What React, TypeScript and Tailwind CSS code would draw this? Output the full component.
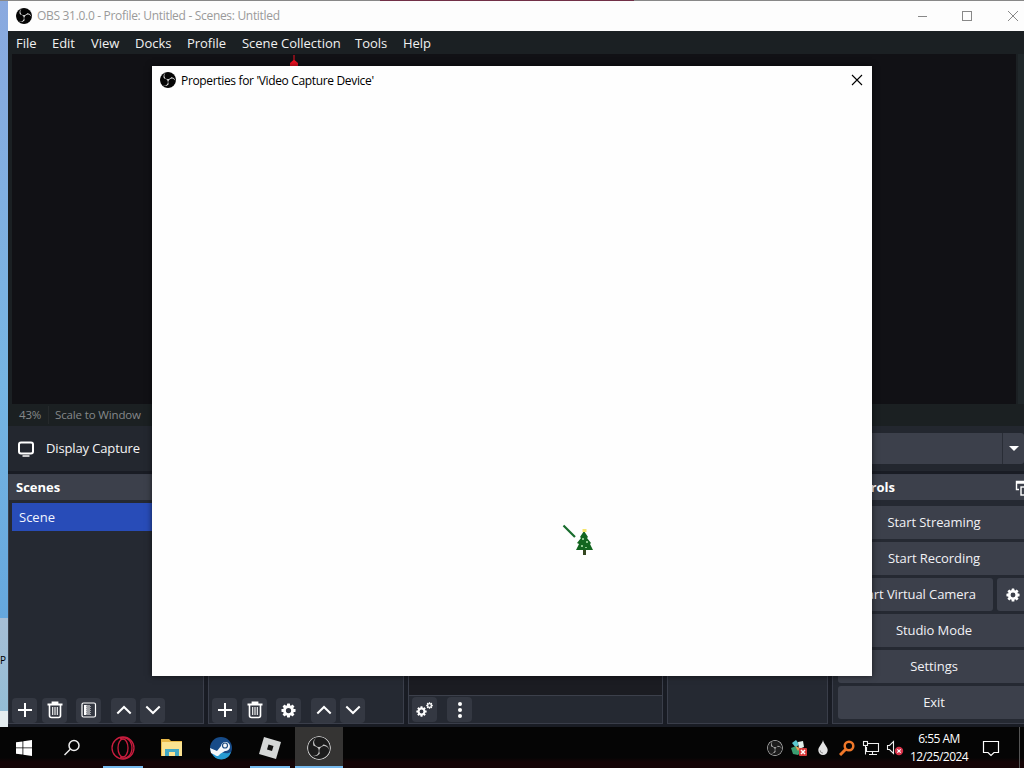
import React from 'react';
import { SiObsstudio } from 'react-icons/si';

const ObsLogo: React.FC<{ className?: string }> = ({ className = '' }) => (
  <SiObsstudio className={`shrink-0 rounded-full bg-[#1c1c1c] text-[#c4c4c4] ${className}`} />
);

// Solid variant for title bars: the outer ring is clipped by the disc
const ObsDisc = () => (
  <div className="flex h-4 w-4 shrink-0 items-center justify-center overflow-hidden rounded-full bg-[#050505] text-[#f4f4f4]">
    <SiObsstudio className="h-[18px] w-[18px] shrink-0" />
  </div>
);

const Plus = () => (
  <svg viewBox="0 0 16 16" className="h-4 w-4" stroke="#fff" strokeWidth="2" fill="none">
    <path d="M8 1v14M1 8h14" />
  </svg>
);

const Trash = () => (
  <svg viewBox="0 0 16 18" className="h-[18px] w-4" stroke="#fff" fill="none">
    <path d="M0.5 3.5h15M5.5 3V1.5h5V3" strokeWidth="1.8" />
    <path d="M2.5 4v10.5a2 2 0 0 0 2 2h7a2 2 0 0 0 2-2V4" strokeWidth="1.6" />
    <path d="M5.7 6v8M8 6v8M10.3 6v8" strokeWidth="1.1" />
  </svg>
);

const Filters = () => (
  <svg viewBox="0 0 16 16" className="h-4 w-4">
    <rect x="1" y="1" width="13.5" height="14" rx="1.5" fill="none" stroke="#fff" strokeWidth="1.2" />
    <rect x="3" y="3" width="2.5" height="10" fill="#fff" />
    <path d="M6 3v10M8 3v10" stroke="#fff" strokeWidth="1" strokeDasharray="1 1" />
    <path d="M7 4v9M9 4v9" stroke="#fff" strokeWidth="1" strokeDasharray="1 1" />
  </svg>
);

const Chevron: React.FC<{ down?: boolean }> = ({ down }) => (
  <svg viewBox="0 0 16 10" className="h-2.5 w-4" stroke="#fff" strokeWidth="2" fill="none">
    <path d={down ? 'M1.3 1.5L8 8l6.7-6.5' : 'M1.3 8.5L8 2l6.7 6.5'} />
  </svg>
);

const Gear: React.FC<{ className?: string }> = ({ className }) => (
  <svg viewBox="0 0 16 16" className={className}>
    <circle cx="8" cy="8" r="4.3" fill="none" stroke="#fff" strokeWidth="3" />
    {[0, 45, 90, 135, 180, 225, 270, 315].map((angle) => (
      <rect key={angle} x="6.4" y="0.5" width="3.2" height="3" rx="0.5" fill="#fff" transform={`rotate(${angle} 8 8)`} />
    ))}
  </svg>
);

const Gears = () => (
  <div className="flex items-start">
    <Gear className="mt-1 h-[11px] w-[11px]" />
    <Gear className="-ml-px h-[7px] w-[7px]" />
  </div>
);

const Dots = () => (
  <svg viewBox="0 0 6 16" className="h-4 w-1.5" fill="#fff">
    <circle cx="3" cy="2" r="2" />
    <circle cx="3" cy="8" r="2" />
    <circle cx="3" cy="14" r="2" />
  </svg>
);

const ToolButton: React.FC<{ children: React.ReactNode; className?: string }> = ({ children, className = '' }) => (
  <button className={`flex h-[25px] w-[25px] shrink-0 items-center justify-center rounded-[4px] bg-[#343842] ${className}`}>{children}</button>
);

const MENU = [
  { label: 'File', width: 'w-[36px]' },
  { label: 'Edit', width: 'w-[39px]' },
  { label: 'View', width: 'w-[44px]' },
  { label: 'Docks', width: 'w-[52px]' },
  { label: 'Profile', width: 'w-[55px]' },
  { label: 'Scene Collection', width: 'w-[113px]' },
  { label: 'Tools', width: 'w-[48px]' },
  { label: 'Help', width: 'w-[44px]' },
];

const TitleBar = () => (
  <div className="flex h-[30px] shrink-0 items-center bg-[#fdfdfd] pl-2 text-[#9a9a9a]">
    <ObsDisc />
    <span className="ml-[5px] whitespace-nowrap text-[12px] tracking-[-0.31px]">
      OBS 31.0.0 - Profile: Untitled - Scenes: Untitled
    </span>
    <svg viewBox="0 0 112 12" className="ml-auto mr-1 h-3 w-28 shrink-0" fill="none" stroke="#888" strokeWidth="1">
      <path d="M10 6.5h9" />
      <rect x="54.5" y="1.5" width="9" height="9" />
      <path d="M100 1l10 10M110 1L100 11" />
    </svg>
  </div>
);

const Dock: React.FC<{ width: string; title?: string; children?: React.ReactNode; tools: React.ReactNode }> = ({ width, title, children, tools }) => (
  <div className={`flex shrink-0 flex-col border border-[#3a3e4a] bg-[#252932] ${width}`}>
    <div className="flex h-[25px] shrink-0 items-center bg-[#3c404b] pl-[7px] text-[13px] font-bold text-white">{title}</div>
    <div className="flex-1 px-[3px] pt-[3px]">{children}</div>
    <div className="flex h-[26px] shrink-0 items-center pl-[3px]">{tools}</div>
  </div>
);

const controlClass = 'flex h-[33px] shrink-0 items-center justify-center rounded-[3px] bg-[#3c404b] text-[13px] tracking-[-0.08px] text-[#f1f1f5]';

const Controls = () => (
  <div className="flex w-[204px] shrink-0 flex-col border border-[#3a3e4a] bg-[#252932]">
    <div className="flex h-[25px] shrink-0 items-center bg-[#3c404b] text-[13px] font-bold text-white">
      <span className="ml-[5px] w-[57px] shrink-0 text-right">Controls</span>
      <svg viewBox="0 0 16 16" className="ml-[120px] h-4 w-4 shrink-0" fill="none" stroke="#fff" strokeWidth="1.4">
        <path d="M4 9.5H1.5V1.5h11v3M1 3h12" />
        <rect x="6" y="7" width="9" height="8" />
      </svg>
    </div>
    <div className="flex flex-col gap-[3px] px-[5px] pt-[6px]">
      <div className={controlClass}>Start Streaming</div>
      <div className={controlClass}>Start Recording</div>
      <div className="flex gap-1">
        <div className={`${controlClass} w-[155px]`}>Start Virtual Camera</div>
        <div className={`${controlClass} w-[32px]`}><Gear className="h-3.5 w-3.5" /></div>
      </div>
      <div className={controlClass}>Studio Mode</div>
      <div className={controlClass}>Settings</div>
      <div className={controlClass}>Exit</div>
    </div>
  </div>
);

const MainWindow = () => (
  <div className="absolute left-2 top-px flex h-[726px] w-[1016px] flex-col overflow-hidden bg-[#1b1f25]">
    <TitleBar />
    <div className="flex h-[23px] shrink-0 items-center bg-[#1b2023] pl-2 pt-0.5 text-[13px] tracking-[-0.03px] text-[#f1f1f1]">
      {MENU.map((item) => (
        <span key={item.label} className={`shrink-0 whitespace-nowrap ${item.width}`}>{item.label}</span>
      ))}
    </div>
    <div className="flex h-[350px] shrink-0 bg-[#1b2023] pl-1">
      <div className="w-[1004px] bg-[#111115]">
        <svg viewBox="0 0 10 12" className="ml-[277px] h-3 w-2.5">
          <path d="M4.5 1h1v5l3.500 3v3H1V9l3.500-3z" fill="#ed1021" />
        </svg>
      </div>
      <div className="ml-0.5 w-1.5 bg-[#20272a]" />
    </div>
    <div className="flex h-[22px] shrink-0 items-center bg-[#1b2022] pl-[11px] text-[11.5px] tracking-[-0.14px] text-[#85888a]">
      <span className="w-[29px]">43%</span>
      <span className="border-l border-[#25292b] pl-[6px]">Scale to Window</span>
    </div>
    <div className="flex h-[45px] shrink-0 items-center bg-[#23272f] pl-[10px]">
      <svg viewBox="0 0 18 16" className="h-4 w-[18px]" fill="none" stroke="#fff" strokeWidth="2">
        <rect x="1" y="1.5" width="14" height="11" rx="2" />
        <path d="M4.5 15h7" strokeWidth="1.5" />
      </svg>
      <span className="ml-[10px] whitespace-nowrap text-[13px] tracking-[-0.13px] text-[#f5f5f5]">Display Capture</span>
      <div className="ml-auto flex h-[31px] w-[190px] items-center justify-end rounded-[3px] bg-[#3c404b]">
        <div className="flex h-full w-[22px] items-center border-l border-[#292d36] pl-[6px]">
          <svg viewBox="0 0 10 6" className="h-1.5 w-2.5"><path d="M0 0h10L5 5z" fill="#fff" /></svg>
        </div>
      </div>
    </div>
    <div className="flex flex-1 gap-[4px] bg-[#191c24] py-[3px]">
      <Dock
        width="w-[196px]"
        title="Scenes"
        tools={
          <>
            <ToolButton><Plus /></ToolButton>
            <ToolButton className="ml-[5px]"><Trash /></ToolButton>
            <ToolButton className="ml-[9px]"><Filters /></ToolButton>
            <ToolButton className="ml-[10px]"><Chevron /></ToolButton>
            <ToolButton className="ml-[4px]"><Chevron down /></ToolButton>
          </>
        }
      >
        <div className="flex h-[28px] items-center bg-[#284cb8] pl-[7px] pt-px text-[13px] text-[#f2f5ff]">Scene</div>
      </Dock>
      <Dock
        width="w-[196px]"
        title="Sources"
        tools={
          <>
            <ToolButton><Plus /></ToolButton>
            <ToolButton className="ml-[5px]"><Trash /></ToolButton>
            <ToolButton className="ml-[9px]"><Gear className="h-[15px] w-[15px]" /></ToolButton>
            <ToolButton className="ml-[10px]"><Chevron /></ToolButton>
            <ToolButton className="ml-[4px]"><Chevron down /></ToolButton>
          </>
        }
      />
      <div className="flex w-[255px] shrink-0 flex-col border border-[#3a3e4a] bg-[#1b1c22]">
        <div className="h-[25px] shrink-0 bg-[#3c404b]" />
        <div className="flex-1" />
        <div className="flex h-[28px] shrink-0 items-center border-t border-[#3c404b] bg-[#252932] pl-[3px]">
          <ToolButton><Gears /></ToolButton>
          <ToolButton className="ml-[10px]"><Dots /></ToolButton>
        </div>
      </div>
      <Dock width="w-[161px]" tools={null} />
      <Controls />
    </div>
  </div>
);

const PropertiesDialog = () => (
  <div className="absolute left-[152px] top-[66px] h-[610px] w-[720px] bg-[#fefefe] shadow-[0_0_6px_rgba(0,0,0,0.6)]">
    <div className="flex h-[28px] items-center pl-2 pr-[9px] text-black">
      <ObsDisc />
      <span className="ml-[5px] whitespace-nowrap pt-px text-[12px] tracking-[-0.34px]">Properties for 'Video Capture Device'</span>
      <svg viewBox="0 0 12 12" className="ml-auto h-3 w-3" stroke="#000" strokeWidth="1.1">
        <path d="M1 1l10 10M11 1L1 11" />
      </svg>
    </div>
    {/* Christmas tree mouse cursor */}
    <svg viewBox="0 0 32 32" className="absolute left-[410px] top-[458px] h-8 w-8">
      <path d="M1.500 1.500L13 13" stroke="#176b2c" strokeWidth="2.200" />
      <path d="M22 7l4 6-1 1 4 5-1 1 3 6H14l3-6-2-1 4-5-1-1z" fill="#12651f" />
      <path d="M21 26h3v5h-3z" fill="#354720" />
      <path d="M20.500 5h4v3h-4z" fill="#f5e56b" />
      <path d="M20 14h2v2h-2zM24 17h2v2h-2zM19 21h2v2h-2zM23 23h2v1h-2z" fill="#8bc58b" />
    </svg>
  </div>
);

const TaskIcon: React.FC<{ children: React.ReactNode; className?: string }> = ({ children, className = 'w-12' }) => (
  <div className={`flex h-full shrink-0 items-center justify-center ${className}`}>{children}</div>
);

const Taskbar = () => (
  <div className="absolute bottom-0 left-0 flex h-[41px] w-full bg-linear-to-b from-[#050505] from-75% to-[#150406] to-85%">
    <TaskIcon>
      <svg viewBox="0 0 16 16" className="h-4 w-4" fill="#fff">
        <path d="M0 2.300l6.500-.9v6.100H0zM7.300 1.300L16 0v7.500H7.300zM0 8.300h6.500v6.300L0 13.700zM7.300 8.300H16V16l-8.700-1.200z" />
      </svg>
    </TaskIcon>
    <TaskIcon>
      <svg viewBox="0 0 18 18" className="h-[18px] w-[18px]" fill="none" stroke="#eee" strokeWidth="1.5">
        <circle cx="11" cy="6.500" r="5" />
        <path d="M7.500 10L1.500 16" />
      </svg>
    </TaskIcon>
    <TaskIcon className="ml-[7px] w-10 border-b-2 border-[#76b9ed] pt-0.5">
      <svg viewBox="0 0 24 24" className="h-6 w-6" fill="none" stroke="#c91d3e" strokeWidth="1.3">
        <circle cx="12" cy="12" r="11" />
        <ellipse cx="12" cy="12" rx="5" ry="9" />
        <path d="M9 3c7-4 12 3 12 9s-5 13-12 9" />
      </svg>
    </TaskIcon>
    <TaskIcon className="ml-[5px] w-12">
      <svg viewBox="0 0 22 19" className="h-[19px] w-[22px]">
        <path d="M0 1h8l2 2h11v15H0z" fill="#e9b949" />
        <path d="M1 4h20v14H1z" fill="#fbe391" />
        <path d="M4 18v-7h14v7h-4v-4H8v4z" fill="#43a9c4" />
      </svg>
    </TaskIcon>
    <TaskIcon className="ml-px w-12">
      <svg viewBox="0 0 24 24" className="h-6 w-6">
        <circle cx="12" cy="12" r="11" fill="#174b88" />
        <path d="M3 17a10 10 0 0 0 19-1c-5 3-9 0-12-1z" fill="#279bd2" />
        <path d="M1 12l7 3 4-5a4.500 4.500 0 1 1 4 5l-5 3a3 3 0 0 1-5 1l-4-2z" fill="#f6f8fa" />
        <circle cx="16" cy="9.500" r="2.500" fill="none" stroke="#1e4d83" strokeWidth="1.2" />
      </svg>
    </TaskIcon>
    <TaskIcon className="ml-[5px] w-10 border-b-2 border-[#76b9ed] pt-0.5">
      <svg viewBox="0 0 24 24" className="h-6 w-6">
        <path d="M6 1l17 5-5 17L1 18z" fill="#d5d7d7" />
        <path d="M10.500 8.500l5 1.500-1.500 5-5-1.500z" fill="#111" />
      </svg>
    </TaskIcon>
    <TaskIcon className="ml-[5px] w-12 border-b-2 border-[#76b9ed] bg-[#353433] pt-0.5">
      <ObsLogo className="h-6 w-6" />
    </TaskIcon>
    <div className="ml-auto flex h-full items-center">
      <ObsLogo className="h-4 w-4" />
      <svg viewBox="0 0 18 18" className="ml-[7px] h-[18px] w-[18px]">
        <path d="M2 4l4-3 3 4-3 4z" fill="#5bc9d0" />
        <path d="M8 3l5-1 1 6-5 2z" fill="#e1efea" />
        <path d="M1 9l5-2 5 6-3 3-5-1z" fill="#3a9c71" />
        <path d="M5 7l5 2-2 3z" fill="#e8a052" />
        <rect x="9" y="9" width="8" height="8" rx="1" fill="#d63a3a" />
        <path d="M11 11l4 4M15 11l-4 4" stroke="#fff" strokeWidth="1.5" />
      </svg>
      <svg viewBox="0 0 12 16" className="ml-[9px] h-[15px] w-3">
        <path d="M6 0C5 5 1 7 1 11a5 5 0 0 0 10 0C11 7 7 5 6 0z" fill="#e4e4e4" />
        <path d="M3 11a3 3 0 0 0 3 3" fill="none" stroke="#888" />
      </svg>
      <svg viewBox="0 0 16 16" className="ml-[10px] h-4 w-4" fill="none" stroke="#f0782a">
        <circle cx="10" cy="6" r="4.3" strokeWidth="2.5" />
        <path d="M6.500 9.500L1 15" strokeWidth="3" />
      </svg>
      <svg viewBox="0 0 18 16" className="ml-[7px] h-4 w-[18px]" fill="none" stroke="#eee" strokeWidth="1.1">
        <path d="M6 3.500h10.500v8H4.500V7M7 14.500h8M10.500 11.500v3" />
        <rect x="1.500" y="1.500" width="4" height="4" />
        <path d="M3.500 6v8.500" />
      </svg>
      <svg viewBox="0 0 18 16" className="ml-[6px] h-4 w-[18px]">
        <path d="M1.500 5.500h2l4-4v12l-4-4h-2z" fill="none" stroke="#eee" strokeWidth="1.1" />
        <circle cx="13" cy="11" r="4.2" fill="#d8334a" />
        <path d="M11.300 9.300l3.400 3.400M14.700 9.300l-3.400 3.400" stroke="#fff" strokeWidth="1.2" />
      </svg>
      <div className="ml-1 flex w-[62px] flex-col items-center whitespace-nowrap text-[12px] leading-[18px] tracking-[-0.55px] text-white">
        <span>6:55 AM</span>
        <span>12/25/2024</span>
      </div>
      <svg viewBox="0 0 18 18" className="ml-[12px] mr-[24px] h-[18px] w-[18px]" fill="none" stroke="#fff" strokeWidth="1.2">
        <path d="M1.500 2.500h15v11h-4.500l-3 3-3-3h-4.500z" />
      </svg>
    </div>
    <div className="absolute right-[4px] top-0 h-full w-px bg-[#555]" />
  </div>
);

export default function App() {
  return (
    <div className="relative h-[768px] w-[1024px] overflow-hidden bg-linear-to-b from-[#8aa9df] via-[#76b5e3] to-[#5b9eda] font-['Open_Sans','Noto_Sans',sans-serif]">
      <div className="absolute left-0 top-[618px] flex h-[109px] w-2 flex-col bg-linear-to-b from-[#a7bed5] to-[#90bdd7]">
        <span className="mt-[35px] text-[10px] leading-[14px] text-black">P</span>
        <div className="mt-auto h-4 bg-[#e5edf0]" />
      </div>
      <div className="flex h-px w-full bg-[#888]">
        <div className="ml-[380px] w-[254px] bg-[#713047]" />
      </div>
      <MainWindow />
      <PropertiesDialog />
      <Taskbar />
    </div>
  );
}
